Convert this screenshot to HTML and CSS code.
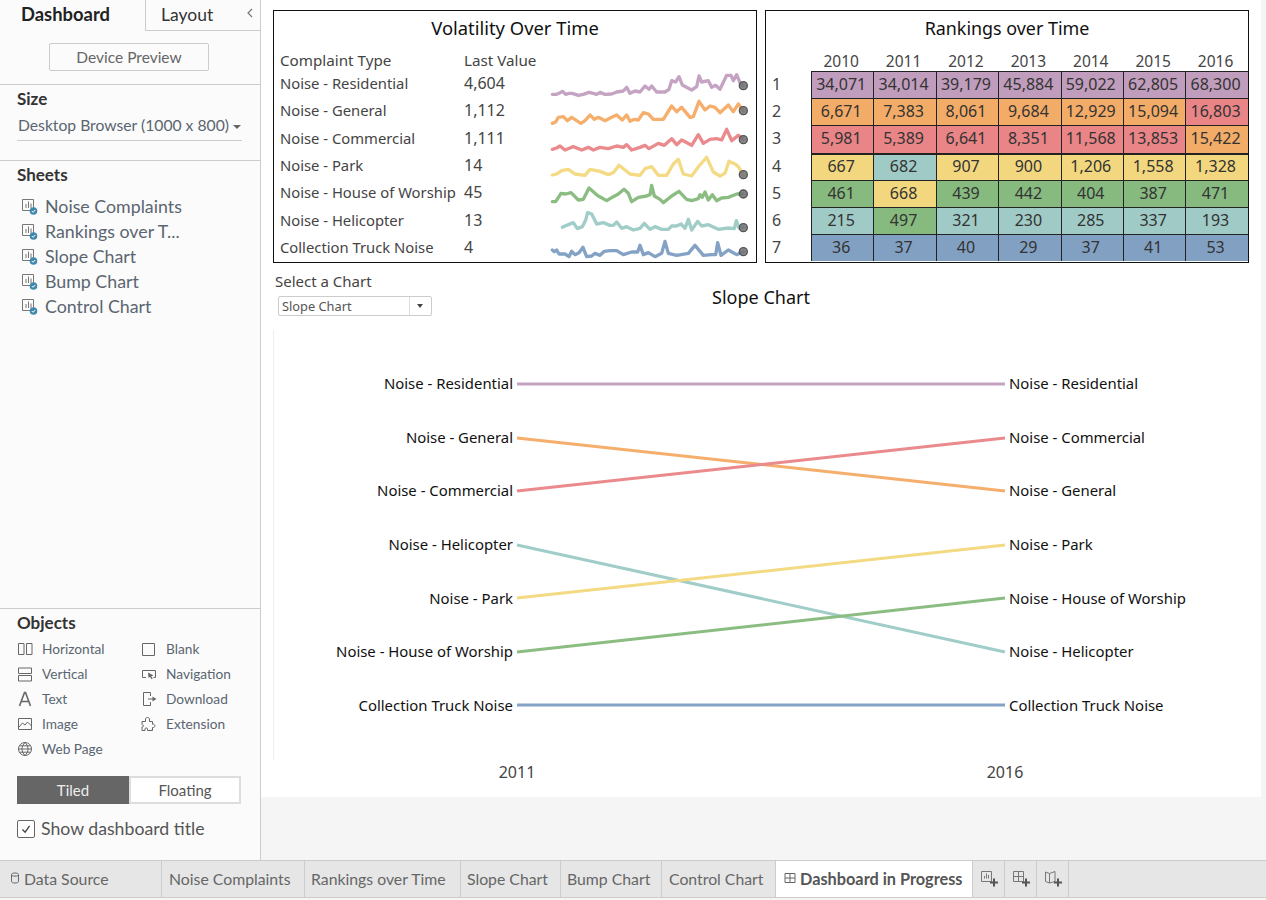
FILE: index.html
```html
<!DOCTYPE html>
<html lang="en">
<head>
    <meta charset="UTF-8">
    <meta name="viewport" content="width=device-width, initial-scale=1.0">
    <title>Dashboard in Progress</title>
    <link rel="stylesheet" href="styles.css">
</head>
<body>
    <svg class="defs" width="0" height="0">
        <symbol id="sheet-used" viewBox="0 0 18 18">
            <path d="M2.5 1.5h11v11h-11z" fill="none" stroke="#777"/>
            <path d="M6 10V6M8.5 10V3.5M11 10V5.5" fill="none" stroke="#777"/>
            <circle cx="13.5" cy="13" r="3.8" fill="#3f88ad"/>
            <path d="M11.8 13l1.3 1.3 2.2-2.4" fill="none" stroke="#fff"/>
        </symbol>
    </svg>

    <div class="app">
        <aside class="sidebar">
            <div class="side-tabs">
                <div class="side-tab active">Dashboard</div>
                <div class="side-tab">Layout<svg class="collapse" viewBox="0 0 8 12"><path d="M6 2L2 6l4 4"/></svg></div>
            </div>
            <div class="preview-row"><button class="preview-btn">Device Preview</button></div>

            <section class="side-section size-section">
                <h3>Size</h3>
                <div class="size-select">Desktop Browser (1000 x 800)<span class="caret"></span></div>
            </section>

            <section class="side-section sheets-section">
                <h3>Sheets</h3>
                <ul class="sheet-list">
                    <li><svg class="sheet-icon"><use href="#sheet-used"/></svg>Noise Complaints</li>
                    <li><svg class="sheet-icon"><use href="#sheet-used"/></svg>Rankings over T...</li>
                    <li><svg class="sheet-icon"><use href="#sheet-used"/></svg>Slope Chart</li>
                    <li><svg class="sheet-icon"><use href="#sheet-used"/></svg>Bump Chart</li>
                    <li><svg class="sheet-icon"><use href="#sheet-used"/></svg>Control Chart</li>
                </ul>
            </section>

            <section class="side-section objects-section">
                <h3>Objects</h3>
                <div class="object-grid">
                    <div class="object"><svg viewBox="0 0 16 16"><path d="M1.5 2.500h5.500v11H1.500zM9.500 2.500H15v11H9.500z"/></svg>Horizontal</div>
                    <div class="object"><svg viewBox="0 0 16 16"><path d="M1.500 2.500h12v12h-12z"/></svg>Blank</div>
                    <div class="object"><svg viewBox="0 0 16 16"><path d="M1.500 2h13v5.500h-13zM1.500 9.500h13V15h-13z"/></svg>Vertical</div>
                    <div class="object"><svg viewBox="0 0 16 16"><path d="M5 11.500H1.500v-7h13v7h-2"/><path class="solid" d="M7 6.500l5.500 3-2.300.7 1.500 2.300-1.200.7-1.400-2.400L7.500 12z"/></svg>Navigation</div>
                    <div class="object"><svg viewBox="0 0 16 16"><path class="letter" d="M2.500 15L7.500 1.500h1L13.500 15M4.500 10.500h7"/></svg>Text</div>
                    <div class="object"><svg viewBox="0 0 16 16"><path d="M9.500 5V1.500H2.500v13h7V11M7 8h5"/><path class="solid" d="M11.500 5.500l4 2.500-4 2.500z"/></svg>Download</div>
                    <div class="object"><svg viewBox="0 0 16 16"><path d="M1.500 2.500h13v11h-13zM2 11l3.500-4 2.500 2 2.500-3 4 4"/></svg>Image</div>
                    <div class="object"><svg viewBox="0 0 16 16"><path d="M4.500 5.500V3c0-2 4-2 4 0v2.500h3v2.700c2.800-.7 3.500 3.800 0 3.300v3h-5v-1.500c0-1.500-2.500-1.500-2.500 0v1.500H1V11c2 .3 2-2.500 0-2.300V5.500z"/></svg>Extension</div>
                    <div class="object"><svg viewBox="0 0 16 16"><circle cx="8" cy="8" r="6.500"/><path d="M1.500 8h13M8 1.500c-4 4-4 9 0 13M8 1.500c4 4 4 9 0 13M2.500 4.800h11M2.500 11.200h11"/></svg>Web Page</div>
                </div>
                <div class="mode-toggle">
                    <div class="mode on">Tiled</div>
                    <div class="mode">Floating</div>
                </div>
                <label class="show-title"><span class="checkbox"><svg viewBox="0 0 18 18"><path d="M5 9.500l3 3 5-7"/></svg></span>Show dashboard title</label>
            </section>
        </aside>

        <main class="main">
            <div class="canvas">
                <div class="top-row">
                    <div class="panel">
                        <div class="panel-title">Volatility Over Time</div>
                        <div class="vol-body">
                            <div class="vol-table">
                                <div class="vol-row vol-head"><span>Complaint Type</span><span>Last Value</span></div>
                                <div class="vol-row"><span>Noise - Residential</span><span class="num">4,604</span></div>
                                <div class="vol-row"><span>Noise - General</span><span class="num">1,112</span></div>
                                <div class="vol-row"><span>Noise - Commercial</span><span class="num">1,111</span></div>
                                <div class="vol-row"><span>Noise - Park</span><span class="num">14</span></div>
                                <div class="vol-row"><span>Noise - House of Worship</span><span class="num">45</span></div>
                                <div class="vol-row"><span>Noise - Helicopter</span><span class="num">13</span></div>
                                <div class="vol-row"><span>Collection Truck Noise</span><span class="num">4</span></div>
                            </div>
                            <svg class="sparks" viewBox="0 0 630 603">
                                <polyline class="purple-line" points="22,103 35,103 42,100 52,94 62,103 72,100 82,100 100,106 115,103 132,97 145,100 155,103 165,97 180,103 200,102 215,96 235,93 245,82 255,100 270,93 285,96 300,78 312,88 320,78 335,96 360,96 372,88 380,62 392,66 402,50 412,75 440,90 455,80 462,48 470,66 490,62 500,82 512,76 525,88 545,46 558,46 565,62 575,44 585,68 595,77"/>
                                <polyline class="orange-line" points="22,190 32,186 40,172 55,170 67,182 80,172 95,182 108,190 120,182 135,165 148,178 160,172 180,182 200,172 215,165 232,180 245,165 255,184 268,178 280,180 295,158 310,162 325,178 355,178 380,138 395,155 410,142 435,172 445,170 462,124 480,150 495,138 510,142 525,158 550,135 565,155 580,132 595,152"/>
                                <polyline class="red-line" points="22,268 35,264 45,258 60,270 75,264 85,260 110,270 130,262 145,270 165,262 190,266 215,258 235,262 245,254 260,270 285,262 300,256 312,266 340,250 358,256 380,236 395,254 410,240 440,256 460,224 475,250 495,238 515,236 530,240 545,208 560,242 580,226 595,238"/>
                                <polyline class="yellow-line" points="22,345 35,342 50,332 70,328 90,342 120,346 135,328 165,334 190,344 205,338 222,316 240,330 255,342 285,346 300,326 320,320 340,346 365,346 385,312 400,298 415,342 440,348 462,318 485,292 505,336 525,348 540,340 552,304 570,312 580,320 595,345"/>
                                <polyline class="green-line" points="22,425 32,425 48,400 62,402 78,398 100,420 115,418 132,384 150,400 160,408 185,422 205,410 220,402 237,388 250,400 260,425 280,412 305,408 315,404 320,376 328,408 345,418 355,428 380,408 402,394 425,418 440,422 460,416 465,404 472,412 480,396 490,420 502,404 515,422 530,414 550,412 575,402 595,402"/>
                                <polyline class="teal-line" points="52,502 65,496 85,488 97,506 112,500 122,480 128,458 140,462 155,492 175,488 195,496 205,496 215,486 230,505 245,500 265,510 285,505 298,490 315,508 330,500 350,508 370,508 380,498 395,498 408,492 420,505 430,478 440,510 458,484 470,498 490,494 520,508 550,504 568,506 574,482 582,504 595,502"/>
                                <polyline class="blue-line" points="22,570 28,575 35,570 42,582 60,582 72,590 80,574 90,584 102,578 114,562 125,590 140,588 150,580 165,586 178,574 195,572 215,572 235,584 260,576 278,576 285,556 295,584 310,578 330,590 350,580 360,544 370,580 395,586 430,580 450,556 475,586 500,584 512,584 518,548 528,586 550,570 575,584 595,575"/>
                                <g class="spark-ends">
                                    <circle cx="595" cy="77" r="12"/>
                                    <circle cx="595" cy="152" r="12"/>
                                    <circle cx="595" cy="239" r="12"/>
                                    <circle cx="595" cy="344" r="12"/>
                                    <circle cx="595" cy="402" r="12"/>
                                    <circle cx="595" cy="503" r="12"/>
                                    <circle cx="595" cy="575" r="12"/>
                                </g>
                            </svg>
                        </div>
                    </div>

                    <div class="panel">
                        <div class="panel-title rank-title">Rankings over Time</div>
                        <div class="rank-grid">
                            <div class="year blank"></div><div class="year">2010</div><div class="year">2011</div><div class="year">2012</div><div class="year">2013</div><div class="year">2014</div><div class="year">2015</div><div class="year">2016</div>

                            <div class="rank">1</div><div class="cell purple">34,071</div><div class="cell purple">34,014</div><div class="cell purple">39,179</div><div class="cell purple">45,884</div><div class="cell purple">59,022</div><div class="cell purple">62,805</div><div class="cell purple">68,300</div>
                            <div class="rank">2</div><div class="cell orange">6,671</div><div class="cell orange">7,383</div><div class="cell orange">8,061</div><div class="cell orange">9,684</div><div class="cell orange">12,929</div><div class="cell orange">15,094</div><div class="cell red">16,803</div>
                            <div class="rank">3</div><div class="cell red">5,981</div><div class="cell red">5,389</div><div class="cell red">6,641</div><div class="cell red">8,351</div><div class="cell red">11,568</div><div class="cell red">13,853</div><div class="cell orange">15,422</div>
                            <div class="rank">4</div><div class="cell yellow thick">667</div><div class="cell teal thick">682</div><div class="cell yellow thick">907</div><div class="cell yellow thick">900</div><div class="cell yellow thick">1,206</div><div class="cell yellow thick">1,558</div><div class="cell yellow thick">1,328</div>
                            <div class="rank">5</div><div class="cell green">461</div><div class="cell yellow">668</div><div class="cell green">439</div><div class="cell green">442</div><div class="cell green">404</div><div class="cell green">387</div><div class="cell green">471</div>
                            <div class="rank">6</div><div class="cell teal">215</div><div class="cell green">497</div><div class="cell teal">321</div><div class="cell teal">230</div><div class="cell teal">285</div><div class="cell teal">337</div><div class="cell teal">193</div>
                            <div class="rank">7</div><div class="cell blue">36</div><div class="cell blue">37</div><div class="cell blue">40</div><div class="cell blue">29</div><div class="cell blue">37</div><div class="cell blue">41</div><div class="cell blue">53</div>
                        </div>
                    </div>
                </div>

                <div class="chart-head">
                    <div class="filter">
                        <div class="filter-label">Select a Chart</div>
                        <div class="filter-select"><span class="filter-value">Slope Chart</span><span class="filter-btn"></span></div>
                    </div>
                    <div class="chart-title">Slope Chart</div>
                </div>

                <svg class="slope" viewBox="273 330 976 460">
                    <line class="slope-axis" x1="273.5" y1="330" x2="273.5" y2="760"/>
                    <line class="purple-line" x1="517" y1="384" x2="1005" y2="384"/>
                    <line class="orange-line" x1="517" y1="438" x2="1005" y2="491"/>
                    <line class="red-line" x1="517" y1="491" x2="1005" y2="438"/>
                    <line class="teal-line" x1="517" y1="545" x2="1005" y2="652"/>
                    <line class="yellow-line" x1="517" y1="598" x2="1005" y2="545"/>
                    <line class="green-line" x1="517" y1="652" x2="1005" y2="598"/>
                    <line class="blue-line" x1="517" y1="705" x2="1005" y2="705"/>
                    <g class="slope-left">
                        <text x="513" y="389">Noise - Residential</text>
                        <text x="513" y="443">Noise - General</text>
                        <text x="513" y="496">Noise - Commercial</text>
                        <text x="513" y="550">Noise - Helicopter</text>
                        <text x="513" y="604">Noise - Park</text>
                        <text x="513" y="657">Noise - House of Worship</text>
                        <text x="513" y="711">Collection Truck Noise</text>
                    </g>
                    <g class="slope-right">
                        <text x="1009" y="389">Noise - Residential</text>
                        <text x="1009" y="443">Noise - Commercial</text>
                        <text x="1009" y="496">Noise - General</text>
                        <text x="1009" y="550">Noise - Park</text>
                        <text x="1009" y="604">Noise - House of Worship</text>
                        <text x="1009" y="657">Noise - Helicopter</text>
                        <text x="1009" y="711">Collection Truck Noise</text>
                    </g>
                    <text class="slope-year" x="517" y="778">2011</text>
                    <text class="slope-year" x="1005" y="778">2016</text>
                </svg>
            </div>
        </main>
    </div>

    <footer class="tabs">
        <div class="tab tab-source"><svg class="db-icon" viewBox="0 0 10 12"><path d="M1.500 2.500c0-2 7-2 7 0v7c0 2-7 2-7 0zM1.500 3c0 1.500 7 1.500 7 0"/></svg>Data Source</div>
        <div class="tab tab-noise">Noise Complaints</div>
        <div class="tab tab-rank">Rankings over Time</div>
        <div class="tab tab-slope">Slope Chart</div>
        <div class="tab tab-bump">Bump Chart</div>
        <div class="tab tab-control">Control Chart</div>
        <div class="tab tab-active"><svg class="dash-icon" viewBox="0 0 12 12"><path d="M1 1.500h10v9H1zM6 1.500v9M1 6h10"/></svg>Dashboard in Progress</div>
        <div class="tab tab-new"><svg viewBox="0 0 18 18"><path d="M.5 1.500h10v10H.5zM3.500 8.500V6M5.500 8.500V3.500M7.500 8.500V5"/><path class="plus" d="M13 8.500v8M9 12.500h8"/></svg></div>
        <div class="tab tab-new"><svg viewBox="0 0 18 18"><path d="M.5 1.500h10v10H.5zM5.500 1.500v10M.5 6.500h10"/><path class="plus" d="M13 8.500v8M9 12.500h8"/></svg></div>
        <div class="tab tab-new"><svg viewBox="0 0 18 18"><path d="M.5 2l4 1.500L10 1.500v10L4.500 13 .5 11.500zM4.500 3.500V13"/><path class="plus" d="M13 8.500v8M9 12.500h8"/></svg></div>
    </footer>
</body>
</html>
```

FILE: styles.css
```css
* {
    box-sizing: border-box;
}
html, body {
    margin: 0;
    height: 900px;
    overflow: hidden;
}
body {
    font-family: 'Lato', sans-serif;
    color: #555;
    background-color: #f5f5f5;
}
.defs {
    position: absolute;
}
.app {
    display: flex;
    height: 860px;
}

/* left pane */
.sidebar {
    width: 261px;
    flex: none;
    display: flex;
    flex-direction: column;
    background-color: #fbfbfb;
    border-right: 1px solid #ccc;
}
.side-tabs {
    display: flex;
    height: 31px;
}
.side-tab {
    position: relative;
    width: 115px;
    padding: 4px 0 0 15px;
    font-size: 17.5px;
    color: #333;
    border-left: 1px solid #ccc;
    border-bottom: 1px solid #ccc;
}
.side-tab.active {
    width: 145px;
    padding: 3px 0 0 21px;
    font-size: 18.4px;
    font-weight: 700;
    color: #222;
    border: none;
}
.collapse {
    position: absolute;
    right: 6px;
    top: 7px;
    width: 8px;
    height: 12px;
    fill: none;
    stroke: #777;
    stroke-width: 1.2;
}
.preview-row {
    height: 54px;
    padding-top: 12px;
    text-align: center;
    border-bottom: 1px solid #ccc;
}
.preview-btn {
    display: block;
    width: 160px;
    height: 28px;
    margin-left: 49px;
    font: 15.5px 'Lato', sans-serif;
    color: #666;
    background-color: #fbfbfb;
    border: 1px solid #ccc;
    border-radius: 2px;
}
.side-section {
    padding-left: 17px;
}
.side-section h3 {
    margin: 0;
    font-size: 17px;
    font-weight: 700;
    line-height: 22px;
    color: #333;
}
.size-section {
    height: 76px;
    padding-top: 3px;
    border-bottom: 1px solid #ccc;
}
.size-select {
    width: 225px;
    height: 29px;
    margin-top: 2px;
    padding: 4px 0 0 1px;
    font-size: 15.7px;
    white-space: nowrap;
    color: #5a6570;
    border-bottom: 1px solid #ccc;
}
.caret {
    display: inline-block;
    margin-left: 4px;
    vertical-align: middle;
    border-top: 4px solid #666;
    border-left: 4px solid transparent;
    border-right: 4px solid transparent;
}
.sheets-section {
    flex: 1;
    padding-top: 3px;
}
.sheet-list {
    margin: 7px 0 0;
    padding: 0;
    list-style: none;
}
.sheet-list li {
    display: flex;
    align-items: center;
    height: 25px;
    font-size: 17.8px;
    color: #5a6570;
}
.sheet-icon {
    width: 18px;
    height: 18px;
    margin: 2px 7px 0 3px;
}
.objects-section {
    height: 252px;
    padding-top: 3px;
    border-top: 1px solid #ccc;
}
.object-grid {
    display: grid;
    grid-template-columns: 124px 1fr;
    grid-auto-rows: 25px;
    margin-top: 2px;
}
.object {
    display: flex;
    align-items: center;
    font-size: 13.7px;
    color: #5a6570;
}
.object svg {
    width: 16px;
    height: 16px;
    margin-right: 9px;
    fill: none;
    stroke: #666;
}
.object .solid {
    fill: #666;
    stroke: none;
}
.object .letter {
    stroke-width: 1.6;
}
.mode-toggle {
    display: flex;
    width: 224px;
    height: 28px;
    margin-top: 15px;
}
.mode {
    flex: 1;
    padding-top: 3px;
    font-size: 15px;
    text-align: center;
    color: #555;
    background-color: #fff;
    border: 2px solid #ddd;
}
.mode.on {
    color: #eee;
    background-color: #666;
    border-color: #666;
}
.show-title {
    display: flex;
    align-items: center;
    margin-top: 14px;
    font-size: 17.7px;
    color: #555;
}
.checkbox {
    width: 18px;
    height: 18px;
    margin-right: 6px;
    background-color: #fff;
    border: 1px solid #666;
    border-radius: 2px;
}
.checkbox svg {
    display: block;
    width: 16px;
    height: 16px;
    fill: none;
    stroke: #444;
    stroke-width: 1.5;
}

/* dashboard */
.main {
    flex: 1;
    background-color: #f5f5f5;
}
.canvas {
    width: 1000px;
    height: 797px;
    padding: 10px 12px 0;
    background-color: #fff;
    font-family: 'Noto Sans', sans-serif;
    color: #444;
}
.top-row {
    display: flex;
    gap: 8px;
}
.panel {
    width: 484px;
    height: 253px;
    border: 1px solid #111;
}
.panel-title {
    height: 36px;
    font-size: 18.4px;
    line-height: 34px;
    text-align: center;
    color: #111;
}
.rank-title {
    font-size: 17.9px;
}
.vol-body {
    display: flex;
}
.vol-table {
    width: 271px;
    flex: none;
    padding-left: 6px;
}
.vol-row {
    display: grid;
    grid-template-columns: 184px 1fr;
    height: 27.4px;
    font-size: 14.8px;
    line-height: 24px;
    white-space: nowrap;
}
.vol-row .num {
    font-size: 16px;
}
.vol-head {
    height: 23.8px;
    font-size: 15.2px;
    line-height: 26px;
}
.sparks {
    width: 210px;
    height: 201px;
    margin-top: 13px;
    flex: none;
}
.sparks polyline {
    fill: none;
    stroke-width: 10;
    stroke-linejoin: round;
    stroke-linecap: round;
}
.spark-ends circle {
    fill: #707074;
    fill-opacity: 0.85;
    stroke: #555;
    stroke-width: 4;
}

.purple-line { stroke: #c5a3c2; }
.orange-line { stroke: #f5ae6c; }
.red-line { stroke: #ea8a8c; }
.yellow-line { stroke: #f3da83; }
.green-line { stroke: #8bbd82; }
.teal-line { stroke: #a0cdc8; }
.blue-line { stroke: #84a2c5; }

.rank-grid {
    display: grid;
    grid-template-columns: 45px repeat(7, 62.4px);
    grid-template-rows: 24px repeat(7, 27.2px);
}
.year {
    padding-right: 2px;
    font-size: 15.5px;
    line-height: 28px;
    text-align: center;
}
.rank {
    padding-left: 6px;
    font-size: 16px;
    line-height: 27px;
}
.cell {
    padding-right: 3px;
    font-size: 16px;
    line-height: 25px;
    text-align: center;
    white-space: nowrap;
    color: #333;
    border-top: 1px solid #222;
    border-left: 1px solid #222;
}
.cell.thick {
    border-top-width: 2px;
    line-height: 22px;
}
.purple { background-color: #c09dbc; }
.orange { background-color: #f3ac67; }
.red { background-color: #e98487; }
.yellow { background-color: #f2d77e; }
.green { background-color: #87ba7f; }
.teal { background-color: #9fcac6; }
.blue { background-color: #82a0c2; }

.chart-head {
    display: grid;
    grid-template-columns: 1fr auto 1fr;
    align-items: center;
    height: 67px;
}
.filter-label {
    padding-left: 2px;
    font-size: 15px;
    line-height: 20px;
}
.filter {
    padding-top: 8px;
    align-self: start;
}
.filter-select {
    display: flex;
    width: 154px;
    height: 20px;
    margin: 5px 0 0 5px;
    background-color: #fff;
    border: 1px solid #ccc;
    border-radius: 2px;
}
.filter-value {
    flex: 1;
    padding-left: 3px;
    font-size: 12.8px;
    line-height: 18px;
    color: #555;
}
.filter-btn {
    position: relative;
    width: 22px;
    border-left: 1px solid #ddd;
}
.filter-btn::after {
    content: "";
    position: absolute;
    left: 7px;
    top: 7px;
    border-top: 4px solid #444;
    border-left: 3.5px solid transparent;
    border-right: 3.5px solid transparent;
}
.chart-title {
    font-size: 18px;
    color: #111;
}
.slope {
    display: block;
    width: 976px;
    height: 460px;
}
.slope line {
    stroke-width: 3;
}
.slope .slope-axis {
    stroke: #eee;
    stroke-width: 1;
}
.slope text {
    font-size: 14.9px;
    fill: #111;
}
.slope-left text {
    text-anchor: end;
}
.slope .slope-year {
    font-size: 16px;
    text-anchor: middle;
    fill: #444;
}

/* bottom tab strip */
.tabs {
    display: flex;
    height: 38px;
    border-top: 1px solid #ccc;
    border-bottom: 1px solid #ccc;
    background-color: #e6e6e6;
}
.tab {
    display: flex;
    align-items: center;
    padding-bottom: 2px;
    font-size: 15.8px;
    color: #666;
    white-space: nowrap;
    border-right: 1px solid #ccc;
}
.tab-source { width: 162px; padding-left: 10px; }
.tab-noise { width: 143px; padding-left: 7px; }
.tab-rank { width: 156px; padding-left: 6px; }
.tab-slope { width: 100px; padding-left: 6px; }
.tab-bump { width: 101px; padding-left: 6px; }
.tab-control { width: 114px; padding-left: 7px; }
.tab-active {
    width: 197px;
    padding-left: 8px;
    font-size: 16.3px;
    font-weight: 700;
    color: #555;
    background-color: #fff;
}
.db-icon {
    width: 10px;
    height: 12px;
    margin-right: 4px;
    fill: none;
    stroke: #666;
}
.dash-icon {
    width: 12px;
    height: 12px;
    margin-right: 4px;
    fill: none;
    stroke: #666;
}
.tab-new {
    width: 32px;
    padding-left: 8px;
    padding-bottom: 0;
}
.tab-new svg {
    width: 18px;
    height: 18px;
    fill: none;
    stroke: #777;
}
.tab-new .plus {
    stroke: #555;
    stroke-width: 2;
}
```
